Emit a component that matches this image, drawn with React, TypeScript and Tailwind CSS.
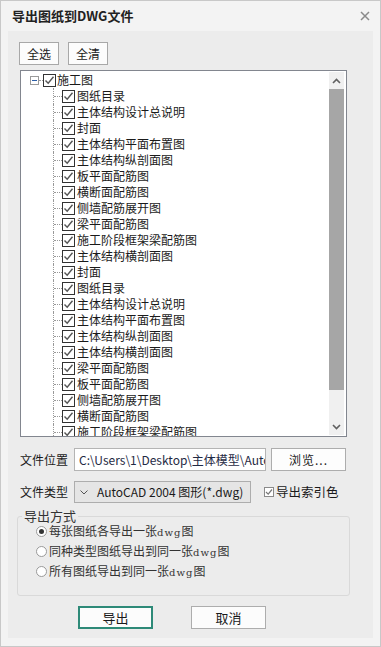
import React from "react";

const font = { fontFamily: '"Noto Sans CJK SC", "Microsoft YaHei", sans-serif' };

const items = [
  "图纸目录",
  "主体结构设计总说明",
  "封面",
  "主体结构平面布置图",
  "主体结构纵剖面图",
  "板平面配筋图",
  "横断面配筋图",
  "侧墙配筋展开图",
  "梁平面配筋图",
  "施工阶段框架梁配筋图",
  "主体结构横剖面图",
  "封面",
  "图纸目录",
  "主体结构设计总说明",
  "主体结构平面布置图",
  "主体结构纵剖面图",
  "主体结构横剖面图",
  "梁平面配筋图",
  "板平面配筋图",
  "侧墙配筋展开图",
  "横断面配筋图",
  "施工阶段框架梁配筋图",
];

function Check() {
  return (
    <span className="w-[13px] h-[13px] border border-[#333] bg-white flex items-center justify-center shrink-0">
      <svg width="11" height="11" viewBox="0 0 11 11">
        <polyline points="1.5,5.5 4.2,8.3 9.5,1.8" fill="none" stroke="#555" strokeWidth="1.4" />
      </svg>
    </span>
  );
}

function Dwg() {
  return <span className="text-[10px] tracking-[1px]" style={{ fontFamily: '"DejaVu Serif", serif' }}>dwg</span>;
}

export default function App() {
  return (
    <div className="w-[381px] h-[647px] border border-[#c8c8c8] bg-[#f3f3f3] flex flex-col text-[12px] text-[#1a1a1a] overflow-hidden" style={font}>
      <div className="h-[30px] flex items-center justify-between pl-[11px] pr-[10px] shrink-0">
        <span className="text-[13px] font-bold text-[#222]">导出图纸到DWG文件</span>
        <svg width="10" height="10" viewBox="0 0 10 10">
          <path d="M1 1 L9 9 M9 1 L1 9" stroke="#8a8a8a" strokeWidth="1.5" />
        </svg>
      </div>
      <div className="mx-[7px] mb-[8px] h-[607px] bg-[#ececec] flex flex-col">
        <div className="flex gap-[9px] pl-[11px] mt-[11px]">
          <button className="w-[40px] h-[23px] border border-[#a8a8a8] bg-[#fcfcfc] text-[12px] leading-none">全选</button>
          <button className="w-[40px] h-[23px] border border-[#a8a8a8] bg-[#fcfcfc] text-[12px] leading-none">全清</button>
        </div>
        <div className="ml-[12px] mt-[5px] w-[327px] h-[367px] border border-[#82868f] bg-white flex">
          <div className="flex-1 overflow-hidden pt-[1px]">
            <div className="h-[16px] flex items-center pl-[9px]">
              <span className="w-[9px] h-[9px] border border-[#9a9a9a] flex items-center justify-center bg-white">
                <span className="w-[5px] h-[1px] bg-[#2d5fa8]" />
              </span>
              <span className="w-[4px] border-t border-dotted border-[#999]" />
              <Check />
              <span className="ml-[1px] leading-none">施工图</span>
            </div>
            {items.map((t, i) => (
              <div key={i} className="h-[16px] flex items-center pl-[32px]">
                <div className="relative w-[9px] h-[16px] border-l border-dotted border-[#999]">
                  <span className="absolute left-0 top-[8px] w-[8px] border-t border-dotted border-[#999]" />
                </div>
                <Check />
                <span className="ml-[2px] leading-none whitespace-nowrap">{t}</span>
              </div>
            ))}
          </div>
          <div className="w-[15px] mr-[2px] mt-[1px] mb-[1px] bg-[#f0f0f0] flex flex-col">
            <div className="h-[17px] flex items-center justify-center">
              <svg width="9" height="6" viewBox="0 0 9 6">
                <path d="M1 5 L4.5 1.5 L8 5" fill="none" stroke="#606060" strokeWidth="1.6" />
              </svg>
            </div>
            <div className="h-[301px] bg-[#a6a6a6]" />
            <div className="flex-1" />
            <div className="h-[17px] flex items-center justify-center">
              <svg width="9" height="6" viewBox="0 0 9 6">
                <path d="M1 1 L4.5 4.5 L8 1" fill="none" stroke="#606060" strokeWidth="1.6" />
              </svg>
            </div>
          </div>
        </div>
        <div className="flex items-center mt-[11px] pl-[12px]">
          <span className="w-[54px]">文件位置</span>
          <div className="w-[192px] h-[23px] border border-[#b4b4b4] bg-white flex items-center pl-[4px] overflow-hidden whitespace-nowrap text-[#1f2a44]">
            C:\Users\1\Desktop\主体模型\AutoCAD
          </div>
          <button className="ml-[5px] w-[75px] h-[23px] border border-[#adadad] bg-[#fdfdfd] text-[12px] leading-none tracking-[1px]">浏览...</button>
        </div>
        <div className="flex items-center mt-[10px] pl-[12px]">
          <span className="w-[54px]">文件类型</span>
          <div className="w-[177px] h-[22px] border border-[#adadad] bg-[#e5e5e5] flex items-center pl-[5px] whitespace-nowrap overflow-hidden">
            <svg width="8" height="5" viewBox="0 0 8 5" className="mr-[9px]">
              <path d="M0.5 0.5 L4 4 L7.5 0.5" fill="none" stroke="#555" strokeWidth="1" />
            </svg>
            <span>AutoCAD 2004 图形(*.dwg)</span>
          </div>
          <span className="ml-[13px] w-[10px] h-[10px] border border-[#8a8a8a] bg-white flex items-center justify-center">
            <svg width="8" height="8" viewBox="0 0 8 8">
              <polyline points="1,4 3.2,6.2 7,1.5" fill="none" stroke="#777" strokeWidth="1.2" />
            </svg>
          </span>
          <span className="ml-[2px] text-[12.5px]">导出索引色</span>
        </div>
        <fieldset className="ml-[9px] mt-[5px] w-[333px] h-[88px] border border-[#d9d9d9] rounded-[3px]">
          <legend className="ml-[4px] px-[2px] text-[13px] text-[#333] leading-[16px]">导出方式</legend>
          <div className="flex flex-col gap-[3px] mt-[-1px] pl-[18px]">
            {[
              [true, <>每张图纸各导出一张<Dwg />图</>],
              [false, <>同种类型图纸导出到同一张<Dwg />图</>],
              [false, <>所有图纸导出到同一张<Dwg />图</>],
            ].map(([sel, label], i) => (
              <div key={i} className="h-[17px] flex items-center">
                <span className="w-[11px] h-[11px] rounded-full border border-[#9a9a9a] bg-white flex items-center justify-center">
                  {sel ? <span className="w-[5px] h-[5px] rounded-full bg-[#333]" /> : null}
                </span>
                <span className="ml-[2px] text-[12px] text-[#333] leading-none whitespace-nowrap">{label as React.ReactNode}</span>
              </div>
            ))}
          </div>
        </fieldset>
        <div className="flex mt-[10px] pl-[70px] gap-[38px]">
          <button className="w-[75px] h-[23px] border-2 border-[#2e8a78] bg-[#fcfcfc] text-[13px] leading-none">导出</button>
          <button className="w-[75px] h-[23px] border border-[#adadad] bg-[#fcfcfc] text-[13px] leading-none">取消</button>
        </div>
      </div>
    </div>
  );
}
